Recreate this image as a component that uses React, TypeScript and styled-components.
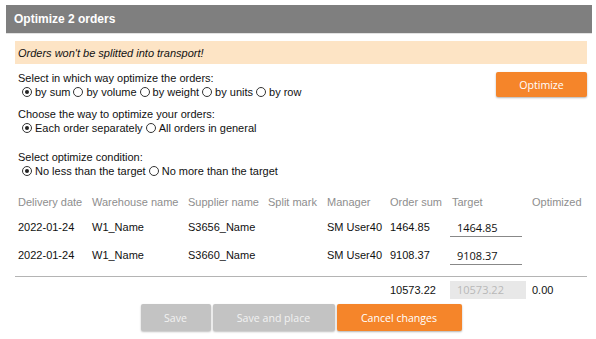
import React from "react";
import styled, { createGlobalStyle } from "styled-components";

const Global = createGlobalStyle`
  html, body { margin: 0; padding: 0; background: #fff; }
  body { font-family: "Liberation Sans", Arial, sans-serif; font-size: 11px; color: #111; }
`;

const Dialog = styled.div`
  width: 596px;
  height: 339px;
  padding: 5px 4px 0 6px;
  box-sizing: border-box;
`;

const Header = styled.div`
  height: 28px;
  background: #7f7f7f;
  border-bottom: 1px solid #e2e2e2;
  color: #fff;
  font-weight: bold;
  font-size: 12px;
  display: flex;
  align-items: center;
  padding-left: 8px;
`;

const Body = styled.div`
  padding: 7px 5px 0 9px;
`;

const Warning = styled.div`
  background: #fde4c5;
  height: 23px;
  display: flex;
  align-items: center;
  padding-left: 3px;
  font-style: italic;
  font-size: 11px;
`;

const OptionsRow = styled.div`
  display: flex;
  justify-content: space-between;
  align-items: flex-start;
`;

const OptionsCol = styled.div`
  display: flex;
  flex-direction: column;
  padding-left: 3px;
`;

const Group = styled.div<{ $gap?: number }>`
  margin-top: ${(p) => p.$gap ?? 6}px;
  display: flex;
  flex-direction: column;
  gap: 2px;
`;

const Label = styled.div`
  line-height: 12px;
`;

const RadioRow = styled.div`
  display: flex;
  align-items: center;
  line-height: 12px;
  padding-left: 4px;
`;

const RadioItem = styled.label`
  display: inline-flex;
  align-items: center;
  gap: 3px;
  margin-right: 3px;
`;

const Circle = styled.span<{ $on?: boolean }>`
  width: 8px;
  height: 8px;
  border-radius: 50%;
  border: 1px solid #333;
  box-sizing: content-box;
  position: relative;
  display: inline-block;
  &::after {
    content: "";
    display: ${(p) => (p.$on ? "block" : "none")};
    position: absolute;
    left: 2px;
    top: 2px;
    width: 4px;
    height: 4px;
    border-radius: 50%;
    background: #222;
  }
`;

const OrangeButton = styled.button`
  background: #f5852a;
  color: #fff;
  border: none;
  border-radius: 2px;
  box-shadow: 0 1px 2px rgba(0, 0, 0, 0.3);
  font-family: "Open Sans", sans-serif;
  font-size: 10.6px;
  height: 25px;
  padding: 0;
  cursor: pointer;
`;

const TopButton = styled(OrangeButton)`
  width: 91px;
  margin-top: 8px;
`;

const Table = styled.div`
  margin-top: 18px;
  display: grid;
  grid-template-columns: 74px 96px 80px 59px 63px 62px 80px 1fr;
  align-items: start;
`;

const Th = styled.div`
  color: #8e8e8e;
  padding: 0 0 0 3px;
  height: 14px;
  line-height: 14px;
  margin-bottom: 4px;
  white-space: nowrap;
`;

const Td = styled.div<{ $last?: boolean }>`
  padding-left: 3px;
  height: ${(p) => (p.$last ? 36 : 28)}px;
  padding-bottom: ${(p) => (p.$last ? 8 : 0)}px;
  display: flex;
  align-items: center;
  white-space: nowrap;
  border-bottom: ${(p) => (p.$last ? "1px solid #b4b4b4" : "none")};
  box-sizing: border-box;
`;

const TargetInput = styled.div`
  width: 72px;
  height: 18px;
  margin-left: -2px;
  margin-top: 2px;
  border-bottom: 1px solid #888;
  display: flex;
  align-items: center;
  padding-left: 7px;
  box-sizing: border-box;
  font-family: "Open Sans", sans-serif;
  font-size: 11px;
`;

const DisabledInput = styled.div`
  width: 76px;
  height: 18px;
  margin-left: -2px;
  background: #e8e8e8;
  color: #b8b8b8;
  display: flex;
  align-items: center;
  padding-left: 7px;
  box-sizing: border-box;
  font-family: "Open Sans", sans-serif;
  font-size: 11px;
`;

const TotalCell = styled.div`
  padding-left: 3px;
  height: 25px;
  display: flex;
  align-items: center;
`;

const Footer = styled.div`
  display: flex;
  justify-content: center;
  gap: 2px;
  margin-top: 2px;
`;

const GrayButton = styled.button<{ $w: number }>`
  width: ${(p) => p.$w}px;
  height: 27px;
  background: #c3c3c3;
  color: #f2f2f2;
  border: none;
  border-radius: 2px;
  box-shadow: 0 1px 2px rgba(0, 0, 0, 0.25);
  font-family: "Open Sans", sans-serif;
  font-size: 10.6px;
  padding: 0;
`;

const CancelButton = styled(OrangeButton)<{ $w: number }>`
  width: ${(p) => p.$w}px;
  height: 27px;
`;

const Radio = ({ on, children }: { on?: boolean; children: React.ReactNode }) => (
  <RadioItem>
    <Circle $on={on} />
    {children}
  </RadioItem>
);

const rows = [
  { date: "2022-01-24", wh: "W1_Name", sup: "S3656_Name", mgr: "SM User40", sum: "1464.85", target: "1464.85" },
  { date: "2022-01-24", wh: "W1_Name", sup: "S3660_Name", mgr: "SM User40", sum: "9108.37", target: "9108.37" },
];

const headers = ["Delivery date", "Warehouse name", "Supplier name", "Split mark", "Manager", "Order sum", "Target", "Optimized"];

export default function App() {
  return (
    <>
      <Global />
      <Dialog>
        <Header>Optimize 2 orders</Header>
        <Body>
          <Warning>Orders won't be splitted into transport!</Warning>
          <OptionsRow>
            <OptionsCol>
              <Group $gap={8}>
                <Label>Select in which way optimize the orders:</Label>
                <RadioRow>
                  <Radio on>by sum</Radio>
                  <Radio>by volume</Radio>
                  <Radio>by weight</Radio>
                  <Radio>by units</Radio>
                  <Radio>by row</Radio>
                </RadioRow>
              </Group>
              <Group $gap={10}>
                <Label>Choose the way to optimize your orders:</Label>
                <RadioRow>
                  <Radio on>Each order separately</Radio>
                  <Radio>All orders in general</Radio>
                </RadioRow>
              </Group>
              <Group $gap={17}>
                <Label>Select optimize condition:</Label>
                <RadioRow>
                  <Radio on>No less than the target</Radio>
                  <Radio>No more than the target</Radio>
                </RadioRow>
              </Group>
            </OptionsCol>
            <TopButton>Optimize</TopButton>
          </OptionsRow>
          <Table>
            {headers.map((h) => (
              <Th key={h}>{h}</Th>
            ))}
            {rows.map((r, i) => {
              const last = i === rows.length - 1;
              return (
                <React.Fragment key={i}>
                  <Td $last={last}>{r.date}</Td>
                  <Td $last={last}>{r.wh}</Td>
                  <Td $last={last}>{r.sup}</Td>
                  <Td $last={last}></Td>
                  <Td $last={last}>{r.mgr}</Td>
                  <Td $last={last}>{r.sum}</Td>
                  <Td $last={last}>
                    <TargetInput>{r.target}</TargetInput>
                  </Td>
                  <Td $last={last}></Td>
                </React.Fragment>
              );
            })}
            <TotalCell />
            <TotalCell />
            <TotalCell />
            <TotalCell />
            <TotalCell />
            <TotalCell>10573.22</TotalCell>
            <TotalCell>
              <DisabledInput>10573.22</DisabledInput>
            </TotalCell>
            <TotalCell>0.00</TotalCell>
          </Table>
          <Footer>
            <GrayButton $w={70}>Save</GrayButton>
            <GrayButton $w={122}>Save and place</GrayButton>
            <CancelButton $w={125}>Cancel changes</CancelButton>
          </Footer>
        </Body>
      </Dialog>
    </>
  );
}
